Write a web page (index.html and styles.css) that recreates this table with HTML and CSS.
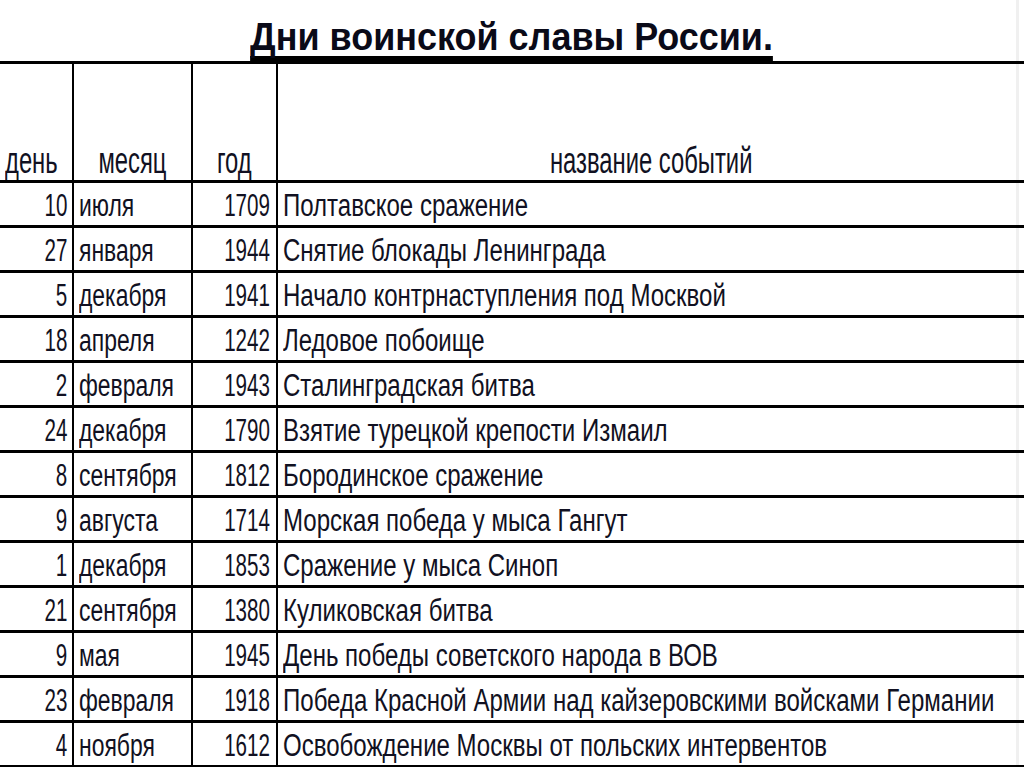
FILE: index.html
```html
<!DOCTYPE html>
<html lang="ru">
<head>
<meta charset="utf-8">
<link rel="stylesheet" href="styles.css">
</head>
<body>
<div class="sheet">
  <h1 class="title"><span class="title-text">Дни воинской славы России.</span></h1>
  <table class="grid">
    <thead>
      <tr>
        <th class="c-day h-left"><span class="t hd hl">день</span></th>
        <th class="c-month h-center"><span class="t hd hc">месяц</span></th>
        <th class="c-year h-center"><span class="t hd hc">год</span></th>
        <th class="c-event h-center"><span class="t hd hc">название событий</span></th>
      </tr>
    </thead>
    <tbody>
      <tr><td class="num"><span class="t n">10</span></td><td><span class="t mo">июля</span></td><td class="num yr"><span class="t n">1709</span></td><td><span class="t ev">Полтавское сражение</span></td></tr>
      <tr><td class="num"><span class="t n">27</span></td><td><span class="t mo">января</span></td><td class="num yr"><span class="t n">1944</span></td><td><span class="t ev">Снятие блокады Ленинграда</span></td></tr>
      <tr><td class="num"><span class="t n">5</span></td><td><span class="t mo">декабря</span></td><td class="num yr"><span class="t n">1941</span></td><td><span class="t ev">Начало контрнаступления под Москвой</span></td></tr>
      <tr><td class="num"><span class="t n">18</span></td><td><span class="t mo">апреля</span></td><td class="num yr"><span class="t n">1242</span></td><td><span class="t ev">Ледовое побоище</span></td></tr>
      <tr><td class="num"><span class="t n">2</span></td><td><span class="t mo">февраля</span></td><td class="num yr"><span class="t n">1943</span></td><td><span class="t ev">Сталинградская битва</span></td></tr>
      <tr><td class="num"><span class="t n">24</span></td><td><span class="t mo">декабря</span></td><td class="num yr"><span class="t n">1790</span></td><td><span class="t ev">Взятие турецкой крепости Измаил</span></td></tr>
      <tr><td class="num"><span class="t n">8</span></td><td><span class="t mo">сентября</span></td><td class="num yr"><span class="t n">1812</span></td><td><span class="t ev">Бородинское сражение</span></td></tr>
      <tr><td class="num"><span class="t n">9</span></td><td><span class="t mo">августа</span></td><td class="num yr"><span class="t n">1714</span></td><td><span class="t ev">Морская победа у мыса Гангут</span></td></tr>
      <tr><td class="num"><span class="t n">1</span></td><td><span class="t mo">декабря</span></td><td class="num yr"><span class="t n">1853</span></td><td><span class="t ev">Сражение у мыса Синоп</span></td></tr>
      <tr><td class="num"><span class="t n">21</span></td><td><span class="t mo">сентября</span></td><td class="num yr"><span class="t n">1380</span></td><td><span class="t ev">Куликовская битва</span></td></tr>
      <tr><td class="num"><span class="t n">9</span></td><td><span class="t mo">мая</span></td><td class="num yr"><span class="t n">1945</span></td><td><span class="t ev">День победы советского народа в ВОВ</span></td></tr>
      <tr><td class="num"><span class="t n">23</span></td><td><span class="t mo">февраля</span></td><td class="num yr"><span class="t n">1918</span></td><td><span class="t ev">Победа Красной Армии над кайзеровскими войсками Германии</span></td></tr>
      <tr><td class="num"><span class="t n">4</span></td><td><span class="t mo">ноября</span></td><td class="num yr"><span class="t n">1612</span></td><td><span class="t ev">Освобождение Москвы от польских интервентов</span></td></tr>
    </tbody>
  </table>
</div>
</body>
</html>
```

FILE: styles.css
```css
html, body {
  margin: 0;
  padding: 0;
  background: #ffffff;
}

body {
  width: 1024px;
  height: 767px;
  overflow: hidden;
  font-family: "Liberation Sans", Arial, sans-serif;
  color: #111122;
}

.sheet {
  position: relative;
  width: 1024px;
  height: 767px;
  overflow: hidden;
}

/* faint edge of the slide on the right */
.sheet::after {
  content: "";
  position: absolute;
  top: 0;
  bottom: 0;
  left: 1016px;
  width: 3px;
  background: #f0f0f0;
  z-index: 0;
}

.title {
  position: relative;
  z-index: 1;
  margin: 0;
  height: 61px;
  display: flex;
  justify-content: center;
  align-items: flex-end;
  font-size: 39px;
  font-weight: bold;
  line-height: 39px;
  color: #0a0a18;
}

.title-text {
  display: inline-block;
  white-space: nowrap;
  border-bottom: 5px solid #000;
  transform: scaleX(0.922);
  transform-origin: center center;
}

.grid {
  position: relative;
  z-index: 1;
  border-collapse: separate;
  border-spacing: 0;
  table-layout: fixed;
  width: 1024px;
}

.grid th,
.grid td {
  box-sizing: border-box;
  padding: 0;
  border-bottom: 3px solid #000;
  border-right: 2px solid #000;
  vertical-align: bottom;
  white-space: nowrap;
  overflow: hidden;
  font-weight: normal;
}

.grid th:last-child,
.grid td:last-child {
  border-right: none;
}

.grid th {
  height: 122px;
  border-top: 3px solid #000;
  font-size: 36px;
  line-height: 36px;
  padding-bottom: 1px;
}

.grid td {
  height: 45px;
  font-size: 31px;
  line-height: 31px;
  padding: 0 5px 4px 5px;
}

.c-day { width: 74px; }
.c-month { width: 119px; }
.c-year { width: 85px; }
.c-event { width: 746px; }

.grid th.h-left {
  text-align: left;
  padding-left: 5px;
}

.grid th.h-center {
  text-align: center;
}

.grid td.num {
  text-align: right;
  padding-right: 5px;
}

.grid td.yr {
  padding-right: 6px;
}

.t {
  display: inline-block;
}

.t.hd { transform: scaleX(0.661); }
.t.n { transform: scaleX(0.664); transform-origin: right center; }
.t.mo { transform: scaleX(0.739); transform-origin: left center; }
.t.ev { transform: scaleX(0.775); transform-origin: left center; }

.t.hl { transform-origin: left center; }
.t.hc { transform-origin: center center; }
```
